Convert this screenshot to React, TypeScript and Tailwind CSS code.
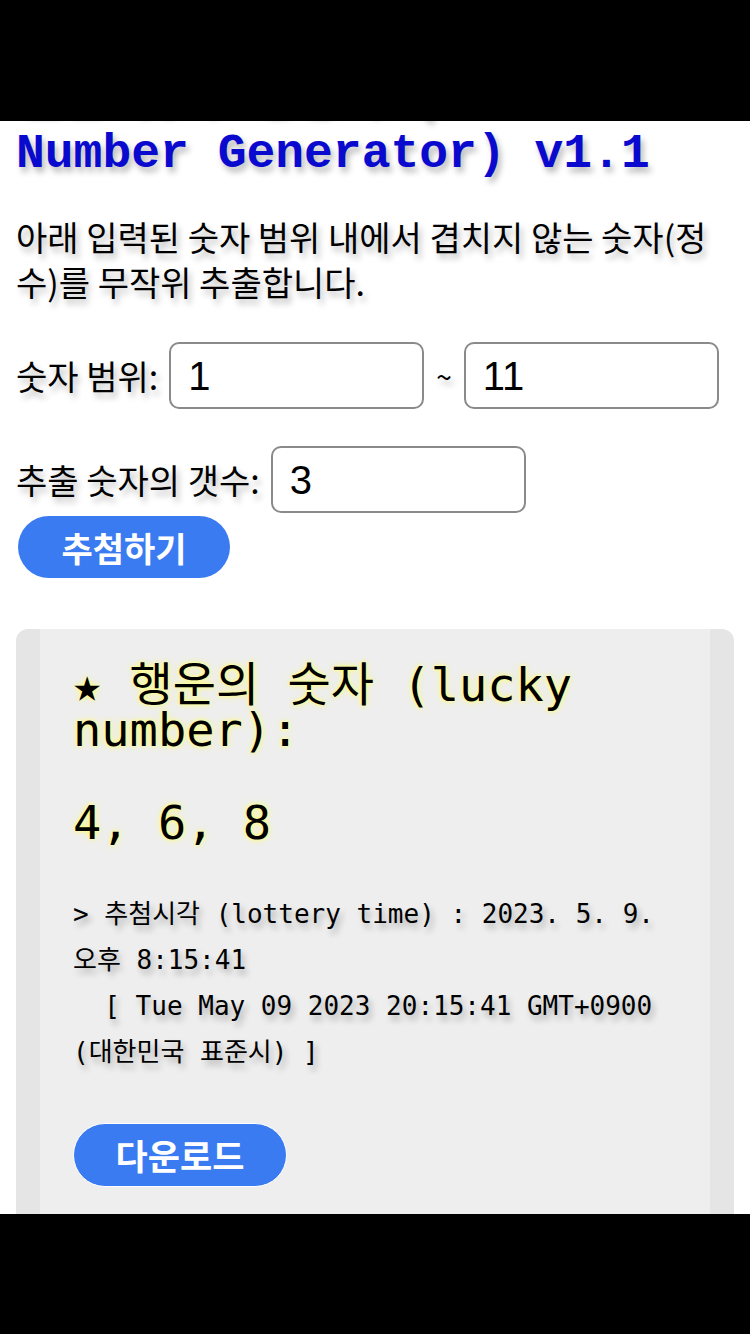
import React from "react";

export default function App() {
  const kr = "font-['Noto_Sans_CJK_KR','Noto_Sans',sans-serif]";
  const shadow = "[text-shadow:3px_5px_6px_rgba(0,0,0,0.28)]";
  const glow = "[text-shadow:0_0_6px_#ffff66,0_0_3px_#ffff99]";
  const input =
    "flex h-[67px] w-[255px] items-center rounded-[10px] border-2 border-[#8a8a8a] pl-[17px] font-['Liberation_Sans',sans-serif] text-[40px] text-black";
  return (
    <div className="relative h-[1334px] w-[750px] overflow-hidden bg-white">
      <div className="pt-[67px] pl-4 pr-3">
        <h1
          className={`font-['Liberation_Mono','Noto_Sans_CJK_KR',monospace] text-[48px] leading-[58px] font-bold text-[#0a0acf] ${shadow}`}
        >
          랜덤 숫자 생성기 (Random Number Generator) v1.1
        </h1>
        <p className={`${kr} mt-[31px] text-[34px] leading-[45px] text-black ${shadow}`}>
          아래 입력된 숫자 범위 내에서 겹치지 않는 숫자(정수)를 무작위 추출합니다.
        </p>
        <div className={`${kr} mt-[38px] flex items-center text-[34px] text-black`}>
          <span className={`${shadow} mr-[11px]`}>숫자 범위:</span>
          <div className={input}>1</div>
          <span className={`${shadow} mx-[12px] text-[28px]`}>~</span>
          <div className={input}>11</div>
        </div>
        <div className={`${kr} mt-[37px] flex items-center text-[34px] text-black`}>
          <span className={`${shadow} mr-[11px]`}>추출 숫자의 갯수:</span>
          <div className={input}>3</div>
        </div>
        <div
          className={`${kr} mt-[3px] ml-[2px] flex h-[62px] w-[212px] items-center justify-center rounded-full bg-[#3a7bf1] text-[34px] font-bold text-white`}
        >
          추첨하기
        </div>
      </div>

      <div className="mx-4 mt-[51px] rounded-xl bg-[#e5e5e5] px-6">
        <div className="bg-[#eeeeee] px-[33px] pt-[33px] pb-[40px]">
          <div
            className={`font-['DejaVu_Sans_Mono','Noto_Sans_CJK_KR',monospace] text-[47px] leading-[45px] text-black ${glow}`}
          >
            ★ 행운의 숫자 (lucky number):
          </div>
          <div
            className={`mt-[46px] font-['DejaVu_Sans_Mono',monospace] text-[47px] leading-[50px] text-black ${glow}`}
          >
            4, 6, 8
          </div>
          <div
            className={`mt-[43px] whitespace-pre-wrap font-['DejaVu_Sans_Mono','Noto_Sans_CJK_KR',monospace] text-[26px] leading-[46px] text-black ${shadow}`}
          >
            {"> 추첨시각 (lottery time) : 2023. 5. 9. 오후 8:15:41\n  [ Tue May 09 2023 20:15:41 GMT+0900 (대한민국 표준시) ]"}
          </div>
          <div
            className={`${kr} mt-[48px] flex h-[64px] w-[214px] items-center justify-center rounded-full border border-white bg-[#3a7bf1] text-[35px] font-bold text-white`}
          >
            다운로드
          </div>
        </div>
      </div>

      <div className="absolute left-0 top-0 h-[121px] w-full bg-black" />
      <div className="absolute bottom-0 left-0 h-[120px] w-full bg-black" />
    </div>
  );
}
